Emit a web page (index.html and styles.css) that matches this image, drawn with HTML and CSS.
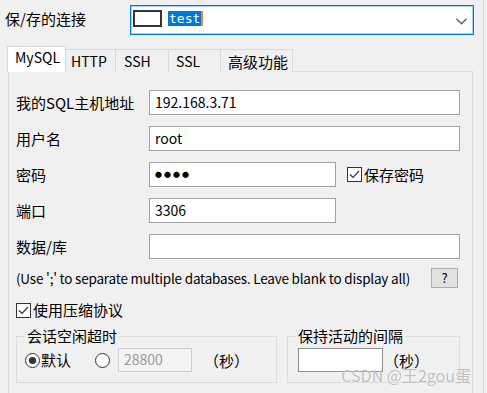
FILE: index.html
```html
<!DOCTYPE html>
<html lang="zh-CN">
<head>
<meta charset="UTF-8">
<meta name="viewport" content="width=device-width, initial-scale=1.0">
<title>连接属性</title>
<link rel="stylesheet" href="styles.css">
</head>
<body>

<div class="window">
  <div class="conn-row">
    <span class="conn-label">保/存的连接</span>
    <div class="combo">
      <span class="swatch"></span>
      <span class="sel">test</span><span class="caret"></span>
      <svg class="chev" width="11" height="7" viewBox="0 0 11 7"><polyline points="0.5,0.8 5.5,5.8 10.5,0.8" fill="none" stroke="#606060" stroke-width="1.4"/></svg>
    </div>
  </div>

  <div class="tabs">
    <div class="tab active">MySQL</div>
    <div class="tab t-http">HTTP</div>
    <div class="tab t-ssh">SSH</div>
    <div class="tab t-ssl">SSL</div>
    <div class="tab t-adv">高级功能</div>
  </div>

  <div class="panel">
    <div class="rows">
      <div class="row">
        <span class="label">我的SQL主机地址</span>
        <div class="field wide">192.168.3.71</div>
      </div>
      <div class="row">
        <span class="label">用户名</span>
        <div class="field wide">root</div>
      </div>
      <div class="row">
        <span class="label">密码</span>
        <div class="field short dots">●●●●</div>
        <span class="check save-pw">
          <svg width="15" height="15" viewBox="0 0 15 15"><rect x="0.5" y="0.5" width="14" height="14" fill="#fff" stroke="#333"/><polyline points="3,7.5 6,10.5 12,4" fill="none" stroke="#333" stroke-width="1.2"/></svg>
          保存密码
        </span>
      </div>
      <div class="row">
        <span class="label">端口</span>
        <div class="field short">3306</div>
      </div>
      <div class="row">
        <span class="label">数据/库</span>
        <div class="field wide"></div>
      </div>
    </div>

    <div class="hint-row">
      <span class="hint">(Use ';' to separate multiple databases. Leave blank to display all)</span>
      <button class="help">?</button>
    </div>

    <div class="check compress">
      <svg width="15" height="15" viewBox="0 0 15 15"><rect x="0.5" y="0.5" width="14" height="14" fill="#fff" stroke="#333"/><polyline points="3,7.5 6,10.5 12,4" fill="none" stroke="#333" stroke-width="1.2"/></svg>
      使用压缩协议
    </div>

    <div class="groups">
      <fieldset class="group g-idle">
        <legend>会话空闲超时</legend>
        <div class="group-body">
          <svg class="radio" width="15" height="15" viewBox="0 0 15 15"><circle cx="7.5" cy="7.5" r="7" fill="#fff" stroke="#333"/><circle cx="7.5" cy="7.5" r="3.6" fill="#333"/></svg>
          <span class="radio-text">默认</span>
          <svg class="radio r-custom" width="15" height="15" viewBox="0 0 15 15"><circle cx="7.5" cy="7.5" r="7" fill="#fff" stroke="#333"/></svg>
          <div class="field small disabled">28800</div>
          <span class="unit">（秒）</span>
        </div>
      </fieldset>
      <fieldset class="group g-keep">
        <legend>保持活动的间隔</legend>
        <div class="group-body">
          <div class="field small keep"></div>
          <span class="unit u-keep">（秒）</span>
        </div>
      </fieldset>
    </div>
  </div>

  <div class="watermark">CSDN @王2gou蛋</div>
</div>

</body>
</html>
```
FILE: styles.css
```css
body {
  margin: 0;
  background-color: #f0f0f0;
  font-family: "Noto Sans CJK SC", sans-serif;
  font-size: 15px;
  color: #000;
}
.window {
  position: relative;
  width: 483px;
  height: 393px;
  overflow: hidden;
  border-right: 1px solid #d6d6d6;
}

/* saved connection combo */
.conn-row {
  display: flex;
  align-items: center;
  padding: 5px 0 0 5px;
  height: 30px;
}
.conn-label {
  width: 125px;
  line-height: 16px;
  margin-top: -3px;
}
.combo {
  display: flex;
  align-items: center;
  width: 344px;
  height: 30px;
  box-sizing: border-box;
  padding-left: 2px;
  background-color: #fff;
  border: 1px solid #0078d7;
  box-shadow: inset 0 0 0 1px rgba(0, 120, 215, 0.35);
}
.swatch {
  width: 29px;
  height: 17px;
  box-sizing: border-box;
  border: 2px solid #333;
  background-color: #fff;
  margin-top: -3px;
}
.sel {
  margin-left: 6px;
  margin-top: -3px;
  padding: 0 1px;
  background-color: #0078d7;
  color: #fff;
  font-family: "DejaVu Sans Mono", monospace;
  font-size: 13px;
  line-height: 15px;
}
.caret {
  width: 2px;
  height: 15px;
  margin-top: -3px;
  background-color: #e8883a;
}
.chev {
  margin-left: auto;
  margin-right: 6px;
  margin-top: 2px;
}

/* tabs */
.tabs {
  display: flex;
  align-items: flex-end;
  height: 26px;
  margin: 11px 0 0 7px;
}
.tab {
  height: 23px;
  box-sizing: border-box;
  padding: 3px 0 0 7px;
  margin-right: -1px;
  border: 1px solid #d9d9d9;
  border-bottom: none;
  background-color: #f0f0f0;
  font-size: 14px;
  line-height: 17px;
}
.tab.active {
  position: relative;
  z-index: 1;
  width: 59px;
  height: 26px;
  padding-top: 2px;
  background-color: #fff;
}
.t-http { width: 51px; padding-left: 5px; }
.t-ssh { width: 54px; padding-left: 8px; }
.t-ssl { width: 53px; }
.t-adv { width: 73px; font-size: 15px; }

/* main panel */
.panel {
  width: 465px;
  height: 330px;
  box-sizing: border-box;
  margin: -1px 0 0 8px;
  padding: 18px 12px 0 7px;
  border: 1px solid #d9d9d9;
  border-bottom: none;
}
.rows {
  display: flex;
  flex-direction: column;
  gap: 11px;
}
.row {
  display: flex;
  align-items: center;
  height: 25px;
}
.label {
  width: 133px;
  line-height: 16px;
}
.field {
  height: 25px;
  box-sizing: border-box;
  padding-left: 5px;
  background-color: #fff;
  border: 1px solid #a2a2a2;
  font-size: 14px;
  line-height: 22px;
}
.field.wide { width: 311px; }
.field.short { width: 187px; }
.dots {
  font-size: 7px;
  letter-spacing: 2px;
  line-height: 23px;
}

.check {
  display: flex;
  align-items: center;
  gap: 2px;
  line-height: 16px;
}
.save-pw {
  margin-left: 11px;
}

.hint-row {
  display: flex;
  align-items: center;
  justify-content: space-between;
  height: 20px;
  margin-top: 9px;
  padding-right: 2px;
}
.hint {
  font-size: 13.5px;
  letter-spacing: -0.2px;
}
.help {
  width: 27px;
  height: 20px;
  padding: 0;
  background-color: #e1e1e1;
  border: 1px solid #adadad;
  font-family: "Noto Sans CJK SC", sans-serif;
  font-size: 13px;
  line-height: 16px;
}

.compress {
  margin-top: 14px;
}

/* group boxes */
.groups {
  display: flex;
  gap: 10px;
  margin-top: 11px;
}
.group {
  margin: 0;
  min-width: 0;
  box-sizing: border-box;
  padding: 5px 0 10px 8px;
  border: 1px solid #dcdcdc;
}
.group legend {
  margin-left: 0;
  padding: 0 2px;
  line-height: 14px;
}
.g-idle { width: 261px; }
.g-keep { width: 173px; padding-left: 10px; }
.g-keep legend { margin-left: -2px; }
.group-body {
  display: flex;
  align-items: center;
  height: 24px;
}
.radio-text {
  margin-left: 1px;
  line-height: 16px;
}
.r-custom {
  margin-left: 24px;
}
.field.small {
  height: 24px;
  font-size: 14px;
  line-height: 21px;
}
.disabled {
  width: 74px;
  margin-left: 8px;
  background-color: #f4f4f4;
  border-color: #cfcfcf;
  color: #9a9a9a;
}
.keep {
  width: 85px;
  border-color: #8f8f8f;
}
.unit {
  margin-left: 12px;
  line-height: 15px;
}
.u-keep {
  margin-left: 1px;
}

.watermark {
  position: absolute;
  right: 12px;
  bottom: 10px;
  font-size: 16px;
  line-height: 15px;
  color: rgba(140, 140, 140, 0.55);
  text-shadow: 0 0 1px #fff;
}
```
